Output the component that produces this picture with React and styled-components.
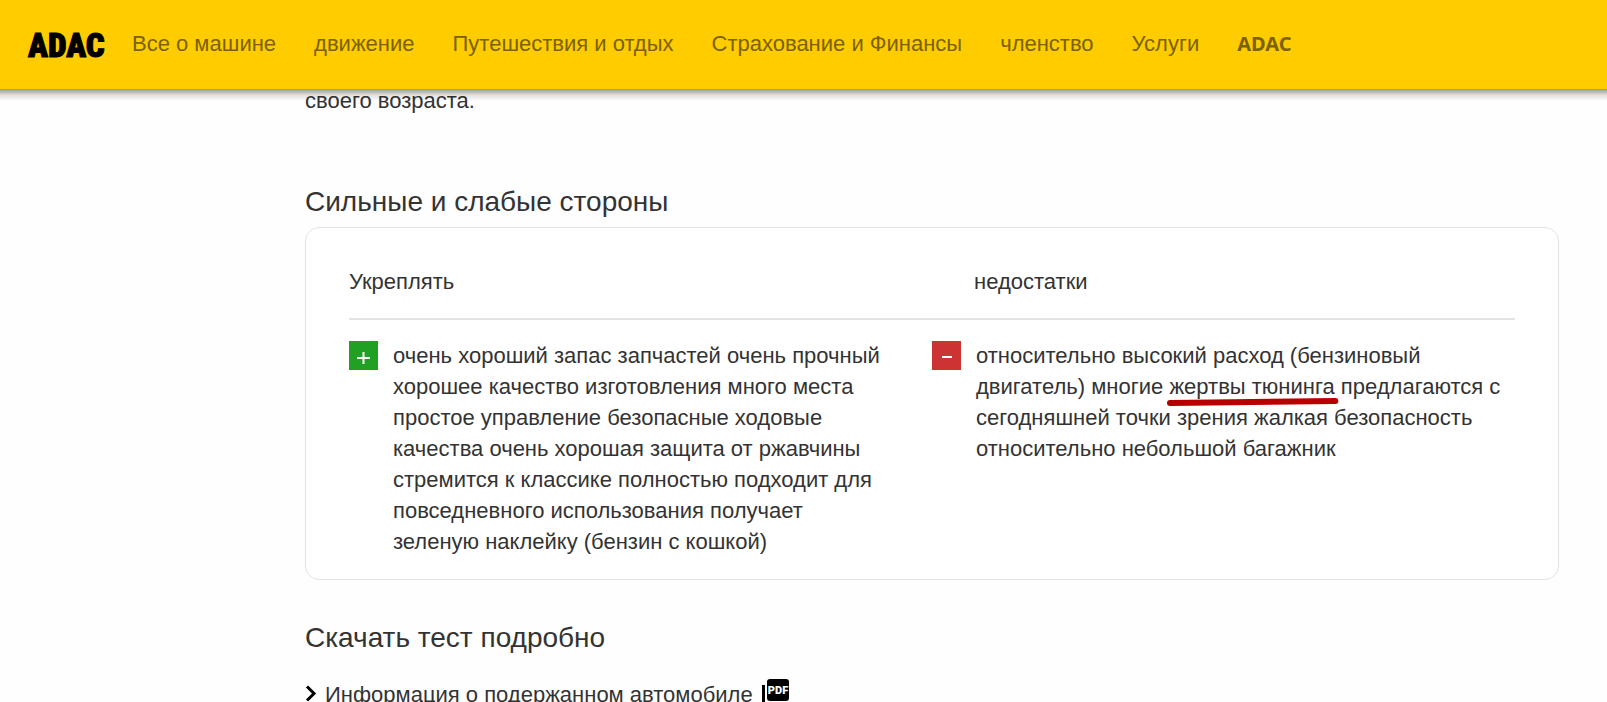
import React from 'react';
import styled, { createGlobalStyle } from 'styled-components';

const GlobalStyle = createGlobalStyle`
    * {
        box-sizing: border-box;
    }
    html, body {
        height: 100%;
    }
    body {
        margin: 0;
        overflow: hidden;
        background-color: #fefefe;
        color: #333;
        font-family: "Liberation Sans", Arial, sans-serif;
        font-size: 22px;
        line-height: 31px;
    }
    a {
        color: inherit;
        text-decoration: none;
    }
`
const Header = styled.header`
    position: fixed;
    top: 0;
    left: 0;
    right: 0;
    z-index: 10;
    height: 89px;
    padding: 0 28px 2px;
    display: flex;
    align-items: center;
    gap: 28px;
    background-color: #ffcc00;

    &::after {
        content: "";
        position: absolute;
        top: 100%;
        left: 0;
        right: 0;
        height: 12px;
        background: linear-gradient(rgba(0, 0, 0, 0.4), rgba(0, 0, 0, 0.12) 50%, transparent);
    }
`
const Logo = styled.a`
    && {
        color: #000;
    }
    flex: none;
    width: 76px;
    padding-top: 3px;
    font-family: "Roboto Condensed", Roboto, sans-serif;
    font-size: 33px;
    font-weight: 900;
    -webkit-text-stroke: 1px #000;
`
const Nav = styled.nav`
    display: flex;
    align-items: center;
    gap: 38px;
    white-space: nowrap;
`
const NavLink = styled.a`
    && {
        color: #7a6205;
    }
    ${props => props.$brand && `
        font-family: "Noto Sans", sans-serif;
        font-size: 20px;
        font-weight: 700;
    `}
`
const Main = styled.main`
    padding: 85px 48px 0 305px;
`
const Intro = styled.p`
    margin: 0 0 67px;
`
const Title = styled.h2`
    margin: 0 0 7px;
    font-size: 28px;
    font-weight: 400;
    line-height: 37px;
`
const Card = styled.section`
    margin-bottom: 39px;
    padding: 22px 43px;
    border: 1px solid #e3e3e3;
    border-radius: 14px;
    background-color: #fff;
`
const Table = styled.table`
    width: 100%;
    table-layout: fixed;
    border-collapse: collapse;
`
const HeadCell = styled.th`
    padding: 16px 0 21px ${props => (props.$indent ? '42px' : '0')};
    border-bottom: 2px solid #e3e3e3;
    font-weight: 400;
    text-align: left;
`
const Cell = styled.td`
    padding: 20px 0 0;
    vertical-align: top;
`
const Points = styled.div`
    display: flex;
    align-items: flex-start;
    gap: 15px;
    padding-right: ${props => (props.$gutter ? '44px' : '0')};
`
const Badge = styled.span`
    flex: none;
    width: 29px;
    height: 29px;
    margin-top: 1px;
    background-color: ${props => props.$color};

    svg {
        display: block;
    }
`
const Marked = styled.span`
    position: relative;
    white-space: nowrap;
`
const Stroke = styled.svg`
    position: absolute;
    left: -2px;
    bottom: -7px;
    width: calc(100% + 6px);
    height: 8px;
    overflow: visible;
`
const Download = styled.a`
    display: flex;
    align-items: center;
    white-space: nowrap;
    margin-top: 23px;
`
const Chevron = styled.svg`
    margin-right: 8px;
`
const PdfIcon = styled.svg`
    margin-left: 9px;
    overflow: visible;
`

const menu = [
    'Все о машине',
    'движение',
    'Путешествия и отдых',
    'Страхование и Финансы',
    'членство',
    'Услуги',
];

const App = () => {
    return (
        <>
            <GlobalStyle />
            <Header>
                <Logo href="#">ADAC</Logo>
                <Nav>
                    {menu.map(item => (
                        <NavLink key={item} href="#">{item}</NavLink>
                    ))}
                    <NavLink href="#" $brand>ADAC</NavLink>
                </Nav>
            </Header>
            <Main>
                <Intro>своего возраста.</Intro>
                <Title>Сильные и слабые стороны</Title>
                <Card>
                    <Table>
                        <thead>
                            <tr>
                                <HeadCell scope="col">Укреплять</HeadCell>
                                <HeadCell scope="col" $indent>недостатки</HeadCell>
                            </tr>
                        </thead>
                        <tbody>
                            <tr>
                                <Cell>
                                    <Points $gutter>
                                        <Badge $color="#21a124">
                                            <svg width="29" height="29" viewBox="0 0 29 29" stroke="#fff" strokeWidth="2" aria-hidden="true">
                                                <path d="M8 17H21M14.5 11V23" />
                                            </svg>
                                        </Badge>
                                        <span>
                                            очень хороший запас запчастей очень прочный хорошее качество изготовления много места простое управление безопасные ходовые качества очень хорошая защита от ржавчины стремится к классике полностью подходит для повседневного использования получает зеленую наклейку (бензин с кошкой)
                                        </span>
                                    </Points>
                                </Cell>
                                <Cell>
                                    <Points>
                                        <Badge $color="#cc3333">
                                            <svg width="29" height="29" viewBox="0 0 29 29" stroke="#fff" strokeWidth="2" aria-hidden="true">
                                                <path d="M10 16H20" />
                                            </svg>
                                        </Badge>
                                        <span>
                                            относительно высокий расход (бензиновый двигатель) многие{' '}
                                            <Marked>
                                                жертвы тюнинга
                                                <Stroke viewBox="0 0 172 8" preserveAspectRatio="none" aria-hidden="true">
                                                    <path d="M3 5L169 3" stroke="#b80000" strokeWidth="6" strokeLinecap="round" />
                                                </Stroke>
                                            </Marked>
                                            {' '}предлагаются с сегодняшней точки зрения жалкая безопасность относительно небольшой багажник
                                        </span>
                                    </Points>
                                </Cell>
                            </tr>
                        </tbody>
                    </Table>
                </Card>
                <Title>Скачать тест подробно</Title>
                <Download href="#">
                    <Chevron width="12" height="20" viewBox="0 0 12 20" fill="none" stroke="#000" strokeWidth="3" aria-hidden="true">
                        <path d="M2 1.5L9 8.5L2 15.5" />
                    </Chevron>
                    Информация о подержанном автомобиле
                    <PdfIcon width="28" height="31" viewBox="0 0 28 31" aria-hidden="true">
                        <rect x="0" y="6" width="3" height="25" fill="#000" />
                        <rect x="5" y="0" width="22" height="22" rx="3" fill="#000" />
                        <text x="16" y="15" fill="#fff" fontFamily="Roboto, sans-serif" fontSize="11" fontWeight="900" textAnchor="middle">PDF</text>
                    </PdfIcon>
                </Download>
            </Main>
        </>
    );
};

export default App;
